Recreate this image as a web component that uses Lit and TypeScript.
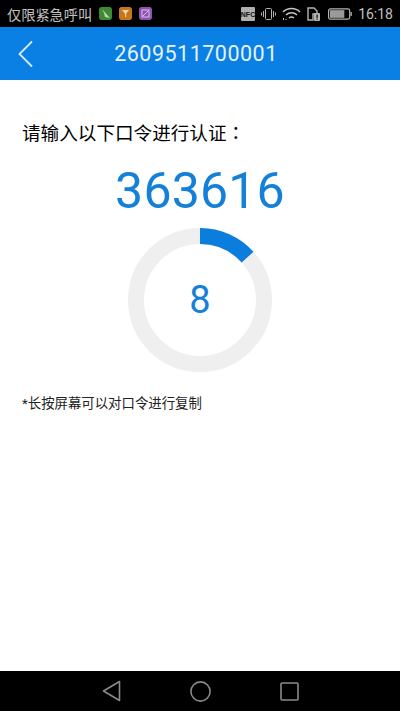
import { LitElement, html, css, svg } from "lit";
import { customElement } from "lit/decorators.js";

const arc = () => {
  const a = (48 * Math.PI) / 180;
  const r = 64;
  const x = 72 + r * Math.sin(a);
  const y = 72 - r * Math.cos(a);
  return svg`<path d="M72 8A${r} ${r} 0 0 1 ${x.toFixed(2)} ${y.toFixed(2)}" fill="none" stroke="#0a7ddd" stroke-width="16"/>`;
};

@customElement("app-root")
export class AppRoot extends LitElement {
  static styles = css`
    :host {
      display: flex;
      flex-direction: column;
      width: 400px;
      height: 711px;
      overflow: hidden;
      background: #fff;
      font-family: "Roboto", "Noto Sans CJK SC", sans-serif;
    }
    .status {
      height: 27px;
      flex: none;
      background: #000;
      color: #c0c0c0;
      display: flex;
      align-items: center;
      padding: 0 7px;
      font-size: 14.2px;
      box-sizing: border-box;
    }
    .carrier {
      margin-right: 7px;
      white-space: nowrap;
    }
    .notif {
      width: 13px;
      height: 13px;
      border-radius: 2px;
      margin-right: 7px;
      display: block;
    }
    .spacer {
      flex: 1;
    }
    .sys {
      display: flex;
      align-items: center;
      gap: 6px;
    }
    .batt {
      margin-left: 2px;
    }
    .clock {
      font-size: 14px;
      color: #c0c0c0;
    }
    .bar {
      height: 53px;
      flex: none;
      background: #0a7fe4;
      color: #e4f2ff;
      display: grid;
      grid-template-columns: 48px 1fr 56px;
      align-items: center;
    }
    .back {
      display: block;
      margin-left: 18px;
    }
    .title {
      text-align: center;
      font-size: 21.5px;
      letter-spacing: 0.5px;
      white-space: nowrap;
    }
    .main {
      flex: 1;
      display: flex;
      flex-direction: column;
      padding: 42px 22px 0;
      box-sizing: border-box;
    }
    .prompt {
      font-size: 18.6px;
      line-height: 24px;
      height: 24px;
      color: #000;
      font-weight: 400;
    }
    .colon {
      font-family: "Noto Sans CJK TC", sans-serif;
      line-height: 1;
    }
    .code {
      text-align: center;
      color: #1580d8;
      font-size: 50px;
      line-height: 58px;
      margin-top: 16px;
      letter-spacing: 0.2px;
    }
    .ring {
      align-self: center;
      position: relative;
      width: 144px;
      height: 144px;
      margin-top: 7.5px;
    }
    .ring svg {
      display: block;
    }
    .count {
      position: absolute;
      inset: 0;
      display: flex;
      align-items: center;
      justify-content: center;
      color: #1580d8;
      font-size: 38px;
    }
    .note {
      font-size: 13.4px;
      line-height: 18px;
      color: #222;
      margin-top: 23.5px;
    }
    .nav {
      height: 40px;
      flex: none;
      background: #000;
      display: flex;
      align-items: center;
      justify-content: center;
      gap: 69px;
    }
    .nav svg {
      display: block;
    }
  `;

  render() {
    return html`
      <div class="status">
        <span class="carrier">仅限紧急呼叫</span>
        <svg class="notif" viewBox="0 0 13 13">
          <rect width="13" height="13" rx="2" fill="#3d8a35" />
          <path d="M3 2l8 9-5-1-1-4z" fill="#b9d4b2" />
        </svg>
        <svg class="notif" viewBox="0 0 13 13">
          <rect width="13" height="13" rx="2" fill="#c8761a" />
          <path d="M3 3h7L6.5 7.5z" fill="#f0d4a8" /><rect x="6" y="7" width="1.2" height="3" fill="#f0d4a8" />
        </svg>
        <svg class="notif" viewBox="0 0 13 13">
          <rect width="13" height="13" rx="2" fill="#8e52b0" />
          <rect x="3" y="3" width="7" height="7" fill="none" stroke="#d9c2e6" />
          <path d="M4 9l5-5" stroke="#d9c2e6" />
        </svg>
        <span class="spacer"></span>
        <div class="sys">
          <svg width="14" height="14" viewBox="0 0 14 14">
            <rect width="14" height="14" rx="1" fill="#b0b0b0" />
            <text x="7" y="10" text-anchor="middle" font-size="7" font-weight="700" font-family="Liberation Sans" fill="#111">NFC</text>
          </svg>
          <svg width="15" height="14" viewBox="0 0 15 14" fill="none" stroke="#b4b4b4">
            <rect x="4.5" y="1.5" width="6" height="11" rx="1" />
            <path d="M2.5 4v6M.5 5.5v3M12.5 4v6M14.5 5.5v3" />
          </svg>
          <svg width="19" height="14" viewBox="0 0 19 14" fill="none" stroke="#c4c4c4" stroke-width="1.5">
            <path d="M1 5a12 12 0 0 1 17 0M4 8a8 8 0 0 1 11 0M7 11a4 4 0 0 1 5 0" />
            <path d="M1.5 13v-2M4 13v-1" stroke-width="1" />
          </svg>
          <svg width="13" height="14" viewBox="0 0 13 14">
            <path d="M1 1h6l3 3v3H6v6H1z" fill="none" stroke="#b4b4b4" stroke-width="1.4" />
            <rect x="7" y="6" width="6" height="8" rx="1" fill="#b4b4b4" />
            <rect x="9.5" y="7.5" width="1.2" height="3.5" fill="#111" />
            <rect x="9.5" y="11.6" width="1.2" height="1.2" fill="#111" />
          </svg>
          <svg class="batt" width="24" height="12" viewBox="0 0 25 12">
            <rect x=".6" y=".6" width="22" height="10.8" rx="2" fill="none" stroke="#b4b4b4" stroke-width="1.2" />
            <rect x="2" y="2" width="15" height="8" fill="#9a9a9a" />
            <rect x="23.4" y="4" width="1.4" height="4" fill="#b4b4b4" />
          </svg>
          <span class="clock">16:18</span>
        </div>
      </div>
      <div class="bar">
        <svg class="back" width="16" height="28" viewBox="0 0 16 28" fill="none" stroke="#d6ebff" stroke-width="1.8">
          <path d="M14 1.5L1.5 14 14 26.5" />
        </svg>
        <div class="title">2609511700001</div>
        <span></span>
      </div>
      <div class="main">
        <div class="prompt">请输入以下口令进行认证<span class="colon">：</span></div>
        <div class="code">363616</div>
        <div class="ring">
          <svg width="144" height="144" viewBox="0 0 144 144">
            <circle cx="72" cy="72" r="64" fill="none" stroke="#efefef" stroke-width="16" />
            ${arc()}
          </svg>
          <div class="count">8</div>
        </div>
        <div class="note">*长按屏幕可以对口令进行复制</div>
      </div>
      <div class="nav">
        <svg width="19" height="22" viewBox="0 0 19 22" fill="none" stroke="#8a8a8a" stroke-width="1.6" stroke-linejoin="round">
          <path d="M17.5 1.5v19L1.5 11z" />
        </svg>
        <svg width="21" height="21" viewBox="0 0 21 21" fill="none" stroke="#8a8a8a" stroke-width="1.6">
          <circle cx="10.5" cy="10.5" r="9.6" />
        </svg>
        <svg width="19" height="19" viewBox="0 0 19 19" fill="none" stroke="#8a8a8a" stroke-width="1.6">
          <rect x="1" y="1" width="17" height="17" rx="1" />
        </svg>
      </div>
    `;
  }
}
